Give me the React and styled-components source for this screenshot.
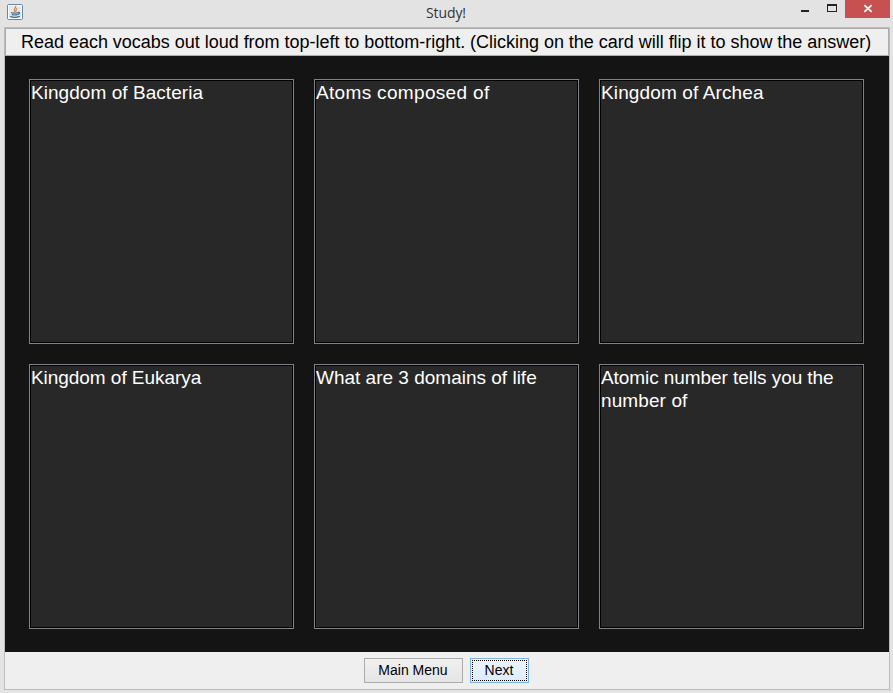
import React from "react";
import styled, { createGlobalStyle, css } from "styled-components";

const GlobalStyle = createGlobalStyle`
  *, *::before, *::after { box-sizing: border-box; }
  body { margin: 0; background: #e3e3e3; overflow: hidden; }
`;

const Window = styled.div`
  width: 893px;
  height: 693px;
  display: flex;
  flex-direction: column;
  padding: 0 3px 3px 4px;
  background: #e3e3e3;
  font-family: "Liberation Sans", Arial, sans-serif;
`;

const TitleBar = styled.header`
  height: 27px;
  flex: none;
  display: grid;
  grid-template-columns: 97px 1fr 99px;
`;

const AppIcon = styled.svg`
  margin: 4px 0 0 3px;
  display: block;
`;

const Title = styled.div`
  text-align: center;
  font: 14px/26px "Open Sans", sans-serif;
  letter-spacing: -0.1px;
  color: #333;
`;

const WindowControls = styled.div`
  display: flex;
  justify-content: flex-end;
  height: 18px;
`;

const ControlButton = styled.button`
  width: ${(p) => p.$width}px;
  height: 18px;
  padding: 0;
  border: 0;
  background: ${(p) => (p.$danger ? "#c75050" : "transparent")};
  svg { display: block; }
`;

const Content = styled.main`
  width: 886px;
  height: 663px;
  flex: none;
  display: flex;
  flex-direction: column;
  border: 1px solid #bcbcbc;
  background: #efefef;
`;

const Instruction = styled.div`
  height: 28px;
  flex: none;
  border: 1px solid #acacac;
  padding-left: 15px;
  color: #000;
  font-size: 18px;
  line-height: 27px;
  letter-spacing: -0.02px;
  white-space: nowrap;
`;

const CardGrid = styled.section`
  height: 596px;
  flex: none;
  display: grid;
  grid-template-columns: repeat(3, 265px);
  grid-template-rows: repeat(2, 265px);
  gap: 20px;
  padding: 23px 24px;
  background: #141414;
`;

const Card = styled.article`
  border: 1px solid #7f8289;
  box-shadow: inset 0 0 0 1px #000;
  background: #282828;
  color: #fff;
  padding: 1px;
  font-size: 19px;
  line-height: 23px;
`;

const Line = styled.div`
  white-space: nowrap;
  letter-spacing: ${(p) => p.$spacing}px;
`;

const Footer = styled.footer`
  flex: 1;
  display: flex;
  justify-content: center;
  gap: 7px;
  padding: 6px 2px 0 0;
`;

const Button = styled.button`
  width: ${(p) => p.$width}px;
  height: 25px;
  padding: 0;
  border: 1px solid #acacac;
  background: linear-gradient(#f0f0f0, #e5e5e5);
  font: 14px/23px "Liberation Sans", Arial, sans-serif;
  color: #000;
  ${(p) =>
    p.$focused &&
    css`
      border-color: #7eb4ea;
      background: linear-gradient(#ecf4fc, #dcecfc);
      outline: 1px dotted #000;
      outline-offset: -3px;
    `}
`;

const cards = [
  [{ text: "Kingdom of Bacteria", spacing: 0.05 }],
  [{ text: "Atoms composed of", spacing: 0.33 }],
  [{ text: "Kingdom of Archea", spacing: 0.12 }],
  [{ text: "Kingdom of Eukarya", spacing: -0.05 }],
  [{ text: "What are 3 domains of life", spacing: 0 }],
  [
    { text: "Atomic number tells you the", spacing: -0.07 },
    { text: "number of", spacing: 0.1 },
  ],
];

function JavaIcon() {
  return (
    <AppIcon width="16" height="16" viewBox="0 0 16 16" fill="none">
      <rect x=".5" y=".5" width="15" height="15" rx="1.5" fill="#e4e9ee" stroke="#6788a3" />
      <rect x="1.5" y="1.5" width="13" height="13" stroke="#f8fafc" />
      <path d="M8.6 1.8C9.6 4 5.6 4.6 7.8 7.8M10.2 4.2C8 5.2 9.9 6.2 8.6 7.8" stroke="#dc8140" strokeWidth="1.2" />
      <path d="M4 8.5c1.5.9 5.4.8 7 0M4.8 10.4c1.5.6 4.2.6 5.6 0M11.1 8.3c2.3-.2 1.6 1.8-.4 2.3M3.2 12.4c2.3 1 7 .9 9.6-.2" stroke="#426b91" strokeWidth="1.2" />
    </AppIcon>
  );
}

export default function App() {
  return (
    <>
      <GlobalStyle />
      <Window>
        <TitleBar>
          <JavaIcon />
          <Title>Study!</Title>
          <WindowControls>
            <ControlButton $width={26} aria-label="Minimize">
              <svg width="26" height="18"><rect x="9" y="10" width="8" height="2" fill="#222" /></svg>
            </ControlButton>
            <ControlButton $width={27} aria-label="Maximize">
              <svg width="27" height="18" shapeRendering="crispEdges">
                <path d="M9 4h10v8H9zM10 6v5h8V6z" fill="#222" fillRule="evenodd" />
              </svg>
            </ControlButton>
            <ControlButton $width={45} $danger aria-label="Close">
              <svg width="45" height="18">
                <path d="M19.3 5.1l7.4 6.8M26.7 5.1l-7.4 6.8" stroke="#fff" strokeWidth="1.8" />
              </svg>
            </ControlButton>
          </WindowControls>
        </TitleBar>
        <Content>
          <Instruction>
            Read each vocabs out loud from top-left to bottom-right. (Clicking on the card will flip it to show the answer)
          </Instruction>
          <CardGrid>
            {cards.map((lines) => (
              <Card key={lines[0].text}>
                {lines.map((line) => (
                  <Line key={line.text} $spacing={line.spacing}>{line.text}</Line>
                ))}
              </Card>
            ))}
          </CardGrid>
          <Footer>
            <Button $width={99}>Main Menu</Button>
            <Button $width={59} $focused>Next</Button>
          </Footer>
        </Content>
      </Window>
    </>
  );
}
